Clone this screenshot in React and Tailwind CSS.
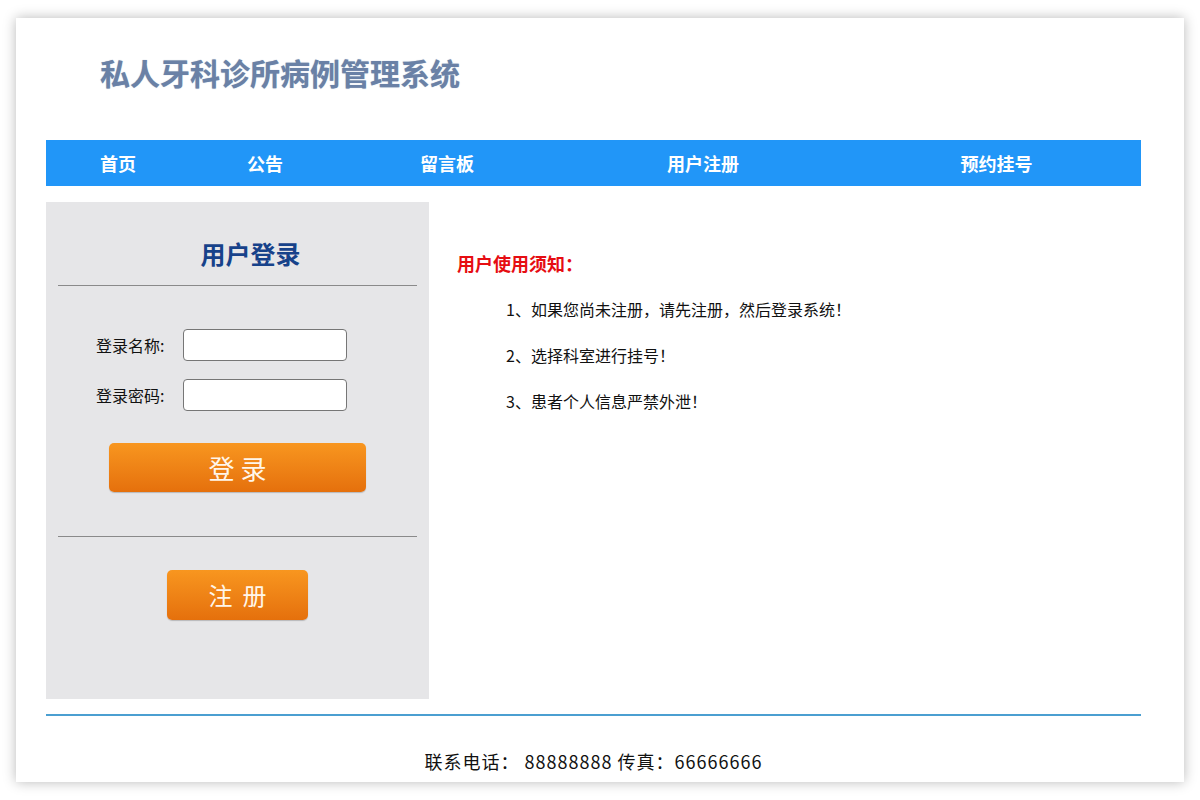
const navItems = [
  { label: '首页', w: 'w-[144px]' },
  { label: '公告', w: 'w-[150px]' },
  { label: '留言板', w: 'w-[214px]' },
  { label: '用户注册', w: 'w-[298px]' },
  { label: '预约挂号', w: 'flex-1' },
]

const notices = [
  '1、如果您尚未注册，请先注册，然后登录系统！',
  '2、选择科室进行挂号！',
  '3、患者个人信息严禁外泄！',
]

const cn = { fontFamily: '"Noto Sans CJK SC", "Noto Sans", sans-serif' }

function OrangeButton({ children, className }) {
  return (
    <button
      type="button"
      className={
        'block mx-auto rounded-[5px] bg-gradient-to-b from-[#f8961f] to-[#e5700c] text-[#fff6ea] shadow-[0_1px_1px_rgba(0,0,0,0.2)] ' +
        className
      }
    >
      {children}
    </button>
  )
}

function LoginPanel() {
  return (
    <div className="w-[383px] h-[497px] bg-[#e6e6e8] flex-none pt-[35px]">
      <h2 className="text-center pl-[26px] text-[25px] leading-[32px] font-bold text-[#17428a]">用户登录</h2>
      <div className="mx-[12px] mt-[16px] h-px bg-[#8a8a8a]" />

      <div className="mt-[43px] pl-[50px] flex flex-col gap-[18px]">
        <div className="flex items-center">
          <label className="w-[87px] text-[16px] text-[#111]">登录名称:</label>
          <input className="w-[164px] h-[32px] bg-white border border-[#767676] rounded-[4px]" />
        </div>
        <div className="flex items-center">
          <label className="w-[87px] text-[16px] text-[#111]">登录密码:</label>
          <input type="password" className="w-[164px] h-[32px] bg-white border border-[#767676] rounded-[4px]" />
        </div>
      </div>

      <OrangeButton className="mt-[32px] w-[257px] h-[49px] text-[26px] tracking-[6px] pl-[6px]">登录</OrangeButton>

      <div className="mx-[12px] mt-[44px] h-px bg-[#8a8a8a]" />

      <OrangeButton className="mt-[33px] w-[141px] h-[50px] text-[24px] tracking-[10px] pl-[10px]">注册</OrangeButton>
    </div>
  )
}

export default function App() {
  return (
    <div className="w-[1200px] h-[800px] bg-white pt-[18px] pl-[16px]" style={cn}>
      <div className="w-[1168px] h-[764px] bg-white shadow-[0_0_12px_rgba(0,0,0,0.28)] pl-[30px] pr-[43px] flex flex-col">
        <div className="h-[122px] flex items-start pt-[35px] pl-[54px]">
          <h1 className="text-[30px] leading-[38px] font-bold text-[#6a81a6] [text-shadow:0_0_1px_#9fb0c8]">
            私人牙科诊所病例管理系统
          </h1>
        </div>

        <nav className="h-[46px] bg-[#2196f8] flex items-center">
          {navItems.map((item) => (
            <div key={item.label} className={item.w + ' text-center text-white font-bold text-[18px]'}>
              {item.label}
            </div>
          ))}
        </nav>

        <div className="mt-[16px] flex">
          <LoginPanel />
          <div className="pl-[28px] pt-[49px]">
            <h3 className="text-[18px] leading-[24px] font-bold text-[#e60d12]">用户使用须知：</h3>
            <ul className="mt-[22px] pl-[49px] flex flex-col gap-[22px]">
              {notices.map((n) => (
                <li key={n} className="text-[16px] leading-[24px] text-[#111]">
                  {n}
                </li>
              ))}
            </ul>
          </div>
        </div>

        <div className="mt-[15px] h-[2px] bg-[#4b9fd1]" />

        <p className="mt-[33px] text-center text-[18px] leading-[24px] tracking-[1px] text-[#111]">
          联系电话： 88888888 传真：66666666
        </p>
      </div>
    </div>
  )
}
